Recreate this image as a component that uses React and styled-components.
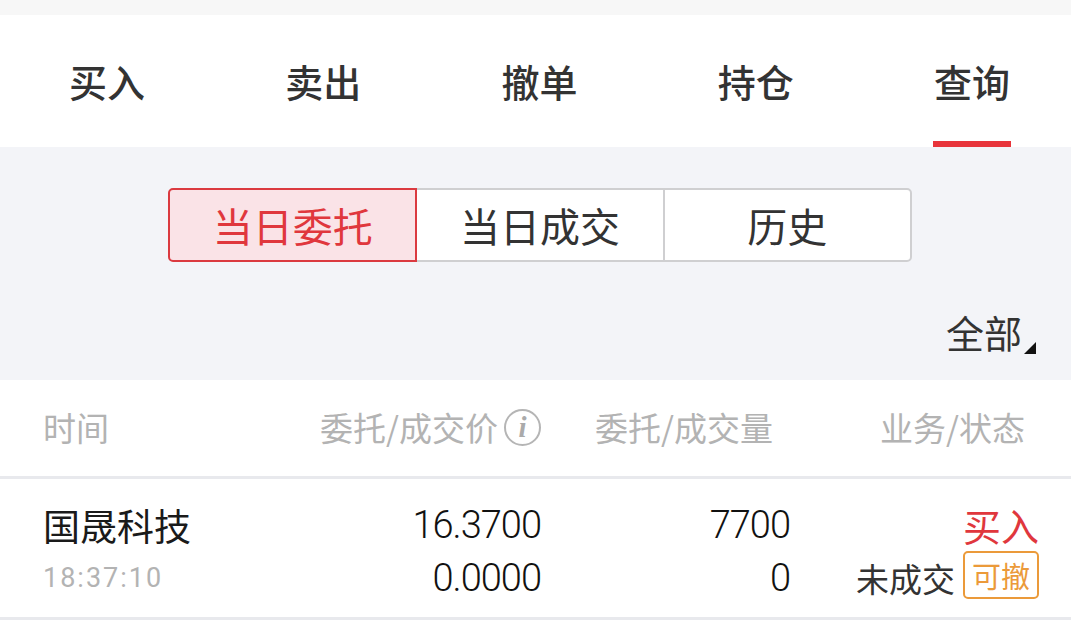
import React from "react";
import styled, { createGlobalStyle } from "styled-components";

const GlobalStyle = createGlobalStyle`
  html, body { margin: 0; padding: 0; background: #ffffff; }
  body { font-family: "Noto Sans CJK SC", "Noto Sans", sans-serif; -webkit-font-smoothing: antialiased; }
  * { box-sizing: border-box; }
`;

const Page = styled.div`
  width: 1071px;
  height: 625px;
  overflow: hidden;
  background: #ffffff;
  display: flex;
  flex-direction: column;
`;

const TopStrip = styled.div`
  height: 15px;
  background: #f7f7f7;
`;

const TabBar = styled.div`
  height: 132px;
  background: #ffffff;
  display: flex;
  justify-content: space-between;
  padding: 0 60px 0 68px;
`;

const Tab = styled.div`
  width: 78px;
  height: 132px;
  display: flex;
  align-items: center;
  justify-content: center;
  padding-top: 6px;
  border-bottom: 6px solid ${(p) => (p.$active ? "#e8343b" : "transparent")};
  font-size: 38px;
  line-height: 1;
  font-weight: 500;
  color: #333333;
  white-space: nowrap;
`;

const GrayArea = styled.div`
  height: 233px;
  background: #f3f4f8;
  display: flex;
  flex-direction: column;
  padding-top: 41px;
`;

const SegGroup = styled.div`
  display: flex;
  width: 744px;
  height: 74px;
  margin-left: 168px;
`;

const Segment = styled.div`
  flex: 1;
  display: flex;
  align-items: center;
  justify-content: center;
  font-size: 40px;
  line-height: 1;
  color: ${(p) => (p.$active ? "#e0373d" : "#333333")};
  background: ${(p) => (p.$active ? "#fae3e7" : "#ffffff")};
  border: 2px solid ${(p) => (p.$active ? "#db3a40" : "#cfcfd1")};
  position: relative;
  z-index: ${(p) => (p.$active ? 1 : 0)};
  & + & { margin-left: -2px; }
  &:first-child { border-radius: 5px 0 0 5px; }
  &:last-child { border-radius: 0 5px 5px 0; }
`;

const FilterRow = styled.div`
  display: flex;
  justify-content: flex-end;
  align-items: flex-end;
  margin-top: 51px;
  padding-right: 35px;
`;

const FilterText = styled.span`
  font-size: 38px;
  line-height: 1;
  color: #333333;
`;

const Caret = styled.span`
  width: 0;
  height: 0;
  margin-left: 2px;
  margin-bottom: -3px;
  border-left: 12px solid transparent;
  border-bottom: 12px solid #111111;
`;

const Table = styled.div`
  background: #ffffff;
  display: flex;
  flex-direction: column;
`;

const Grid = styled.div`
  display: grid;
  grid-template-columns: repeat(4, 1fr);
  padding: 0 32px 0 43px;
  border-bottom: 3px solid #e8e9ed;
`;

const HeaderRow = styled(Grid)`
  height: 99px;
  align-items: center;
  padding-bottom: 2px;
`;

const HeadCell = styled.div`
  display: flex;
  align-items: center;
  justify-content: ${(p) => (p.$right ? "flex-end" : "flex-start")};
  gap: 6px;
  padding-right: ${(p) => p.$pr || 0}px;
  font-size: 33px;
  line-height: 1;
  color: #b3b3b3;
  white-space: nowrap;
`;

const InfoIcon = styled.span`
  width: 37px;
  height: 37px;
  border: 2px solid #b5b5b5;
  border-radius: 50%;
  display: inline-flex;
  align-items: center;
  justify-content: center;
  font-family: "Liberation Serif", "DejaVu Serif", serif;
  font-style: italic;
  font-weight: bold;
  font-size: 29px;
  color: #aaaaaa;
  line-height: 1;
`;

const DataRow = styled(Grid)`
  height: 141px;
  align-items: start;
`;

const Cell = styled.div`
  display: flex;
  flex-direction: column;
  align-items: ${(p) => (p.$right ? "flex-end" : "flex-start")};
  padding-top: 27px;
  gap: 15px;
  padding-right: ${(p) => p.$pr || 0}px;
`;

const Line = styled.div`
  height: 38px;
  display: flex;
  align-items: center;
  gap: 8px;
  white-space: nowrap;
  line-height: 1;
`;

const Name = styled.span`
  font-size: 37px;
  color: #1a1a1a;
`;

const Time = styled.span`
  font-family: Roboto, "Noto Sans", sans-serif;
  font-size: 27px;
  letter-spacing: 2px;
  color: #b3b3b3;
`;

const Num = styled.span`
  font-family: Roboto, "Noto Sans", sans-serif;
  font-weight: 300;
  font-size: 38px;
  letter-spacing: -1px;
  color: #111111;
`;

const Action = styled.span`
  font-size: 38px;
  color: #e0373d;
`;

const Status = styled.span`
  font-size: 33px;
  color: #333333;
`;

const Badge = styled.span`
  width: 76px;
  height: 48px;
  border: 2px solid #eb9a3a;
  border-radius: 5px;
  display: inline-flex;
  align-items: center;
  justify-content: center;
  font-size: 29px;
  color: #eb9a3a;
  line-height: 1;
  margin-top: -6px;
`;

const tabs = ["买入", "卖出", "撤单", "持仓", "查询"];
const segs = ["当日委托", "当日成交", "历史"];

export default function App() {
  return (
    <Page>
      <GlobalStyle />
      <TopStrip />
      <TabBar>
        {tabs.map((t, i) => (
          <Tab key={t} $active={i === 4}>{t}</Tab>
        ))}
      </TabBar>
      <GrayArea>
        <SegGroup>
          {segs.map((s, i) => (
            <Segment key={s} $active={i === 0}>{s}</Segment>
          ))}
        </SegGroup>
        <FilterRow>
          <FilterText>全部</FilterText>
          <Caret />
        </FilterRow>
      </GrayArea>
      <Table>
        <HeaderRow>
          <HeadCell>时间</HeadCell>
          <HeadCell $right>
            委托/成交价
            <InfoIcon>i</InfoIcon>
          </HeadCell>
          <HeadCell $right $pr={17}>委托/成交量</HeadCell>
          <HeadCell $right $pr={14}>业务/状态</HeadCell>
        </HeaderRow>
        <DataRow>
          <Cell>
            <Line><Name>国晟科技</Name></Line>
            <Line><Time>18:37:10</Time></Line>
          </Cell>
          <Cell $right>
            <Line><Num>16.3700</Num></Line>
            <Line><Num>0.0000</Num></Line>
          </Cell>
          <Cell $right>
            <Line><Num>7700</Num></Line>
            <Line><Num>0</Num></Line>
          </Cell>
          <Cell $right>
            <Line><Action>买入</Action></Line>
            <Line>
              <Status>未成交</Status>
              <Badge>可撤</Badge>
            </Line>
          </Cell>
        </DataRow>
      </Table>
    </Page>
  );
}
